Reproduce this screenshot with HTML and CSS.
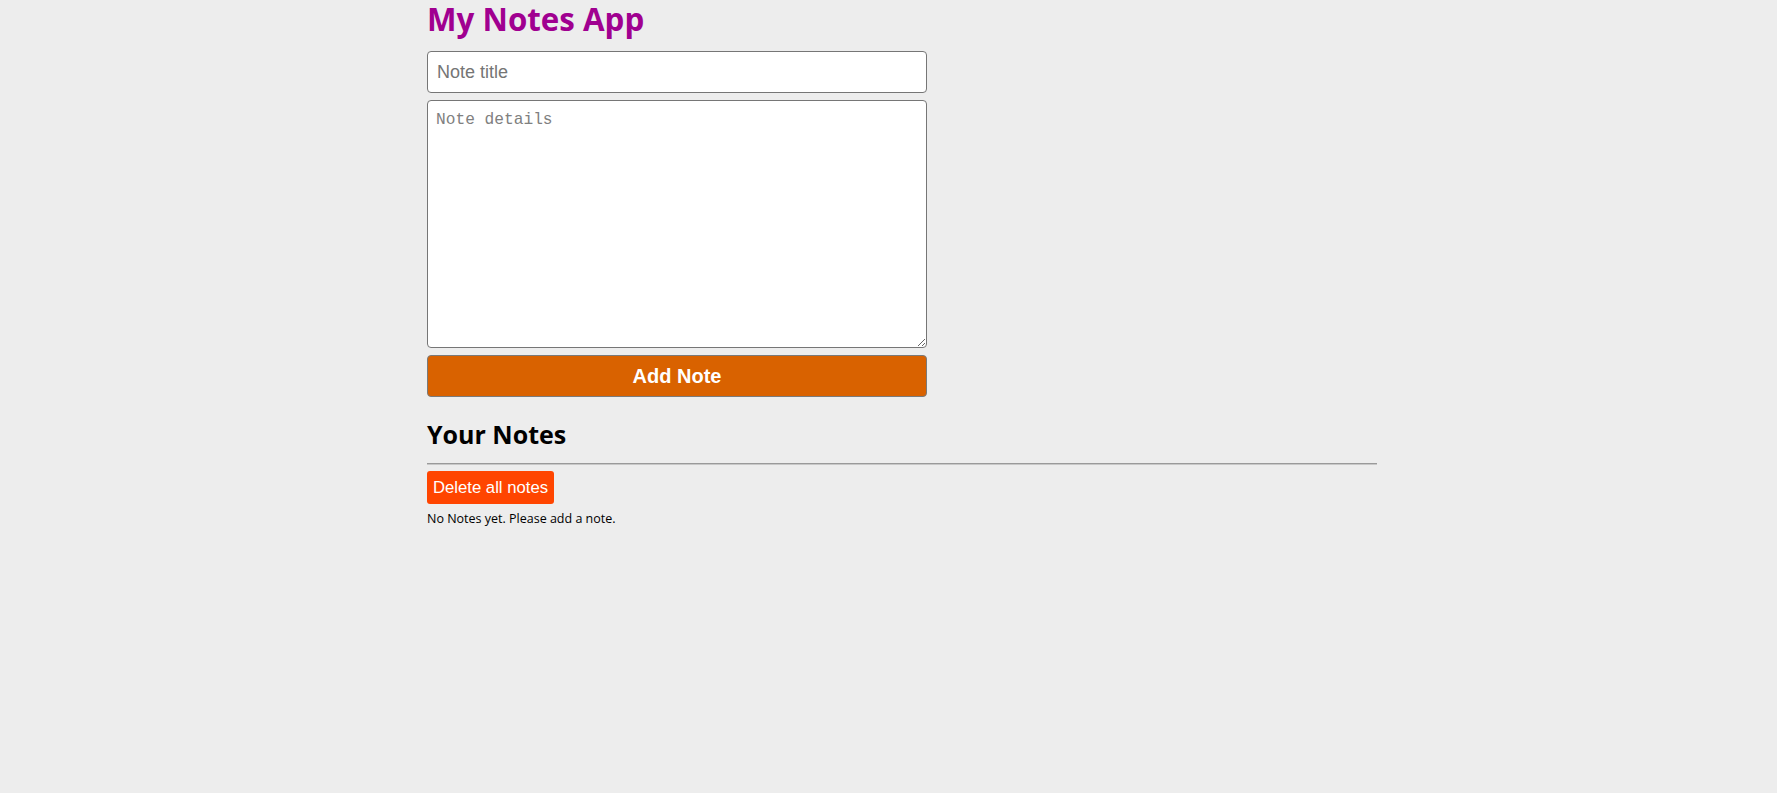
FILE: index.html
```html
<!DOCTYPE html>
<html lang="en">
<head>
<meta charset="utf-8">
<title>My Notes App</title>
<link rel="stylesheet" href="styles.css">
</head>
<body>
<div class="container">
  <h1 class="app-title">My Notes App</h1>
  <form class="note-form">
    <input class="note-title" type="text" placeholder="Note title">
    <textarea class="note-body" placeholder="Note details"></textarea>
    <button class="add-btn" type="button">Add Note</button>
  </form>
  <h2 class="notes-heading">Your Notes</h2>
  <hr class="divider">
  <button class="delete-btn" type="button">Delete all notes</button>
  <p class="empty-msg">No Notes yet. Please add a note.</p>
</div>
</body>
</html>
```
FILE: styles.css
```css
html, body {
  margin: 0;
  padding: 0;
  background: #ededed;
}
body {
  font-family: "Open Sans", "Liberation Sans", sans-serif;
  color: #000;
}
.container {
  width: 950px;
  margin: 0 auto;
  padding-left: 27px;
}
.app-title {
  margin: 0;
  padding-top: 2px;
  font-size: 31.3px;
  line-height: 34px;
  font-weight: 700;
  color: #a00090;
}
.note-form {
  width: 500px;
  display: flex;
  flex-direction: column;
  gap: 7px;
  margin-top: 15px;
}
.note-title {
  box-sizing: border-box;
  width: 500px;
  height: 42px;
  padding: 10px 9px;
  border: 1px solid #767676;
  border-radius: 4px;
  background: #fff;
  font-family: "Liberation Sans", Arial, sans-serif;
  font-size: 18px;
  color: #000;
}
.note-title::placeholder { color: #757575; }
.note-body {
  box-sizing: border-box;
  width: 500px;
  height: 248px;
  padding: 10px 8px 8px;
  border: 1px solid #767676;
  border-radius: 4px;
  background: #fff;
  font-family: "Liberation Mono", "DejaVu Sans Mono", monospace;
  font-size: 16.2px;
  color: #000;
}
.note-body::placeholder { color: #808080; }
.add-btn {
  box-sizing: border-box;
  width: 500px;
  height: 42px;
  border: 1px solid #7a7a7a;
  border-radius: 4px;
  background: #d96200;
  color: #fff;
  font-family: "Liberation Sans", Arial, sans-serif;
  font-weight: 700;
  font-size: 20px;
  padding: 0;
}
.notes-heading {
  margin: 20px 0 0;
  font-size: 25px;
  line-height: 34px;
  font-weight: 700;
}
.divider {
  margin: 12px 0 0;
  width: 950px;
  border: 0;
  border-top: 1px solid #9a9a9a;
  border-bottom: 1px solid #c8c8c8;
  height: 0;
}
.delete-btn {
  display: block;
  margin-top: 6px;
  box-sizing: border-box;
  height: 33px;
  padding: 0 6px;
  border: 0;
  border-radius: 3px;
  background: #ff4500;
  color: #fff;
  font-family: "Liberation Sans", Arial, sans-serif;
  font-size: 16.7px;
}
.empty-msg {
  margin: 6px 0 0;
  font-size: 12.5px;
  line-height: 17px;
}
```
